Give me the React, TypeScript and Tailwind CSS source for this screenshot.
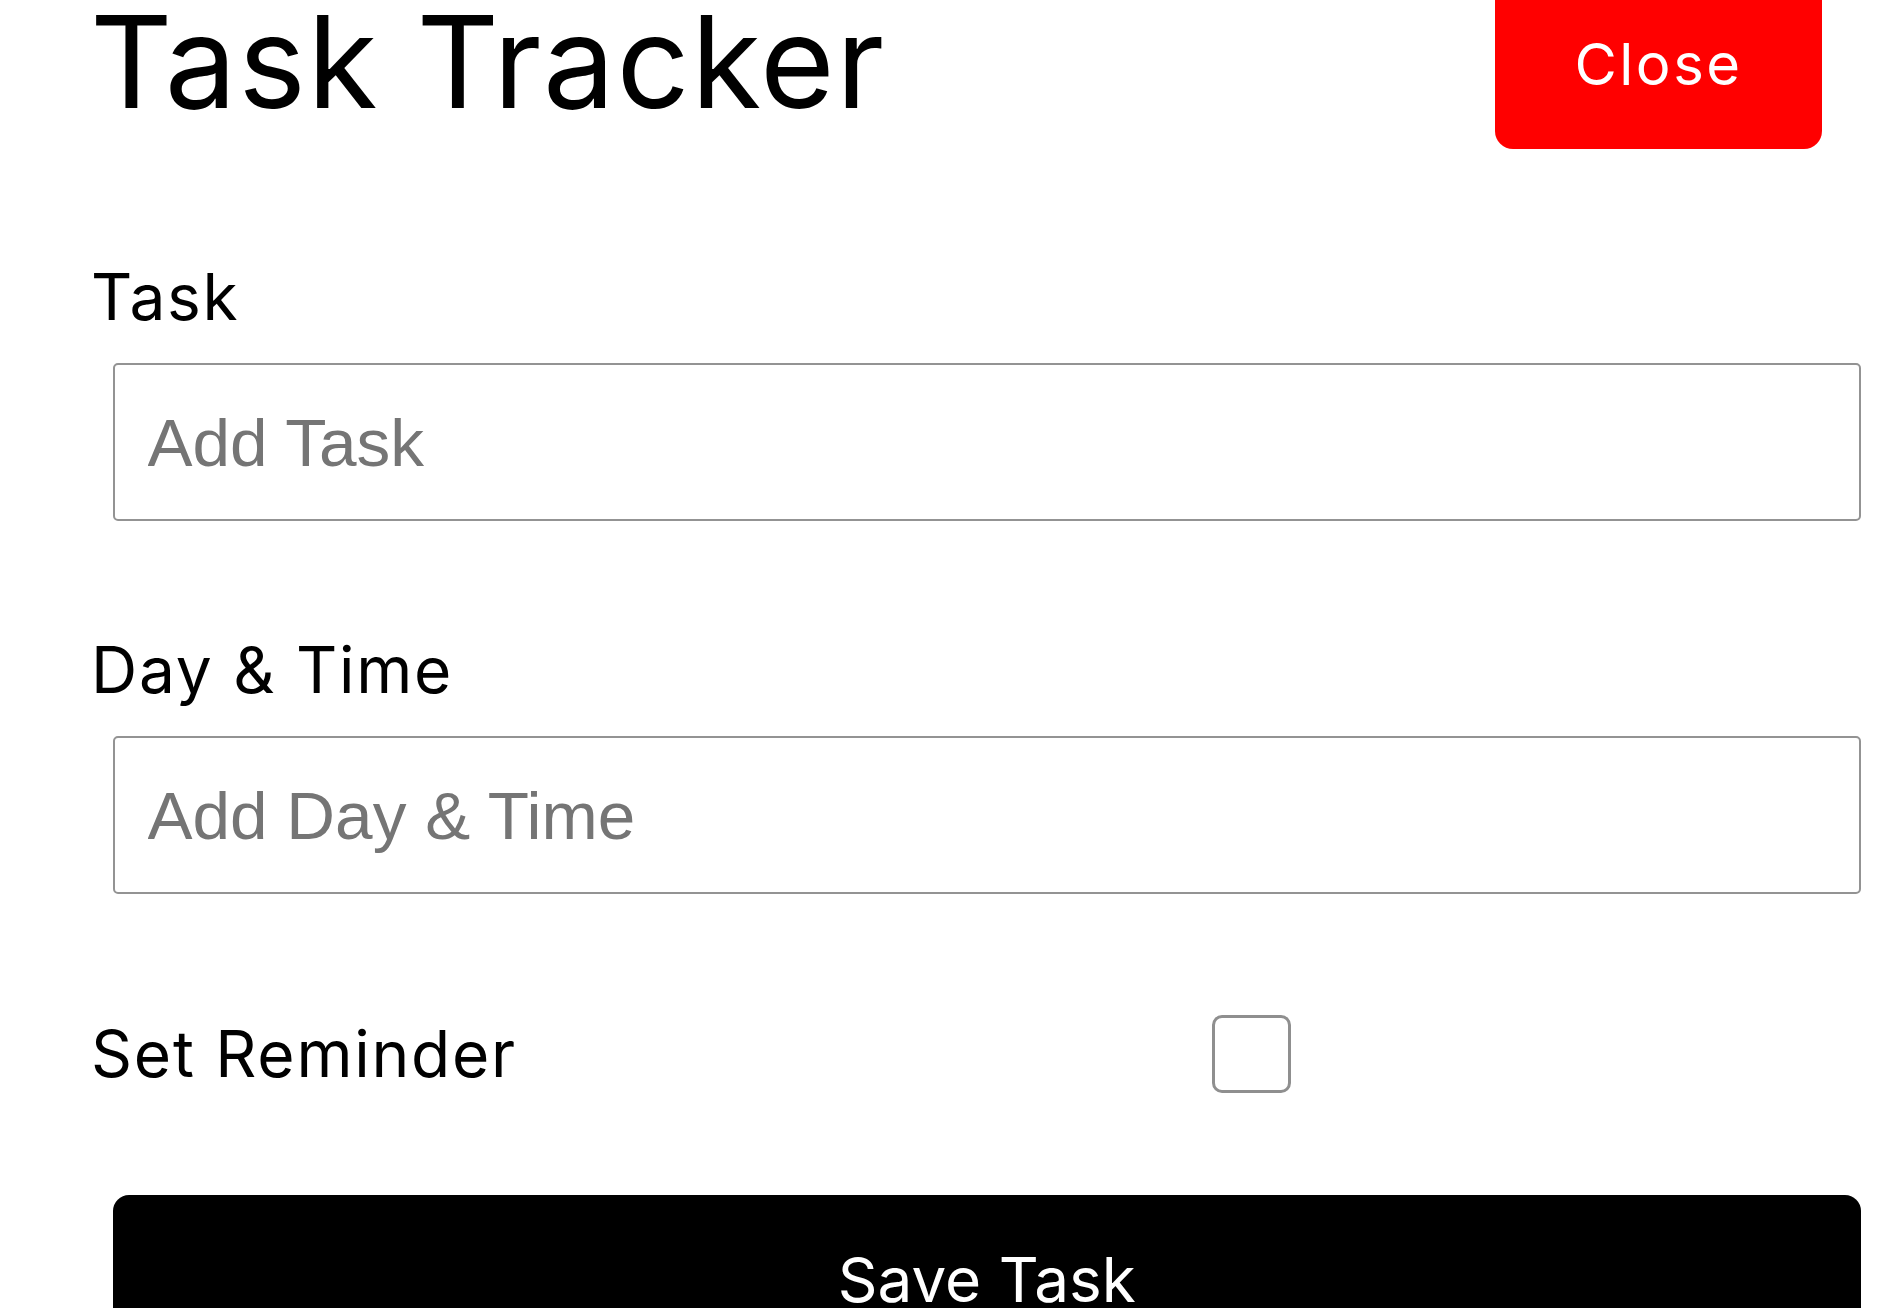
import React from 'react';

const sans = "font-['Inter','Noto_Sans',sans-serif]";

const Field: React.FC<{ label: string; placeholder: string }> = ({ label, placeholder }) => {
  return (
    <div className="flex flex-col">
      <label className={`${sans} -ml-[2px] -mt-[1px] text-[64px] leading-none text-black tracking-[1.75px]`}>{label}</label>
      <div className="pl-[19.5px] mt-[34.5px]">
        <input
          type="text"
          placeholder={placeholder}
          className="block w-full h-[158px] rounded-[5px] border-2 border-[#939393] bg-white px-[33px] font-['Liberation_Sans','Arial',sans-serif] text-[67.5px] text-black placeholder:text-[#757575] outline-none"
        />
      </div>
    </div>
  );
};

export default function App() {
  return (
    <div className="min-h-screen overflow-hidden bg-white">
      <div className="-mt-[21px] pl-[93px] pr-[36px]">
        <header className="flex items-start justify-between pr-[39px]">
          <h1 className={`${sans} -ml-[3px] mt-[18.5px] text-[128px] leading-none font-normal tracking-[1.5px] text-black`}>
            Task Tracker
          </h1>
          <button className={`${sans} h-[170px] w-[327px] rounded-[18px] bg-[#ff0000] text-[58px] leading-none text-white tracking-[2.5px]`}>
            Close
          </button>
        </header>

        <form className="mt-[116.5px] flex flex-col">
          <Field label="Task" placeholder="Add Task" />
          <div className="mt-[117.5px]">
            <Field label="Day & Time" placeholder="Add Day & Time" />
          </div>
          <div className="mt-[121px] flex h-[78px] items-center">
            <label className={`${sans} -ml-[2px] w-[1121px] text-[64px] leading-none text-black tracking-[1.75px]`}>Set Reminder</label>
            <input
              type="checkbox"
              className="h-[78px] w-[79px] appearance-none rounded-[10px] border-[3px] border-[#8f8f8f] bg-white"
            />
          </div>
          <div className="pl-[19.5px] mt-[102px]">
            <button
              type="button"
              className={`${sans} block h-[169px] w-full rounded-[16px] bg-black text-[62px] leading-none text-white`}
            >
              Save Task
            </button>
          </div>
        </form>
      </div>
    </div>
  );
}
